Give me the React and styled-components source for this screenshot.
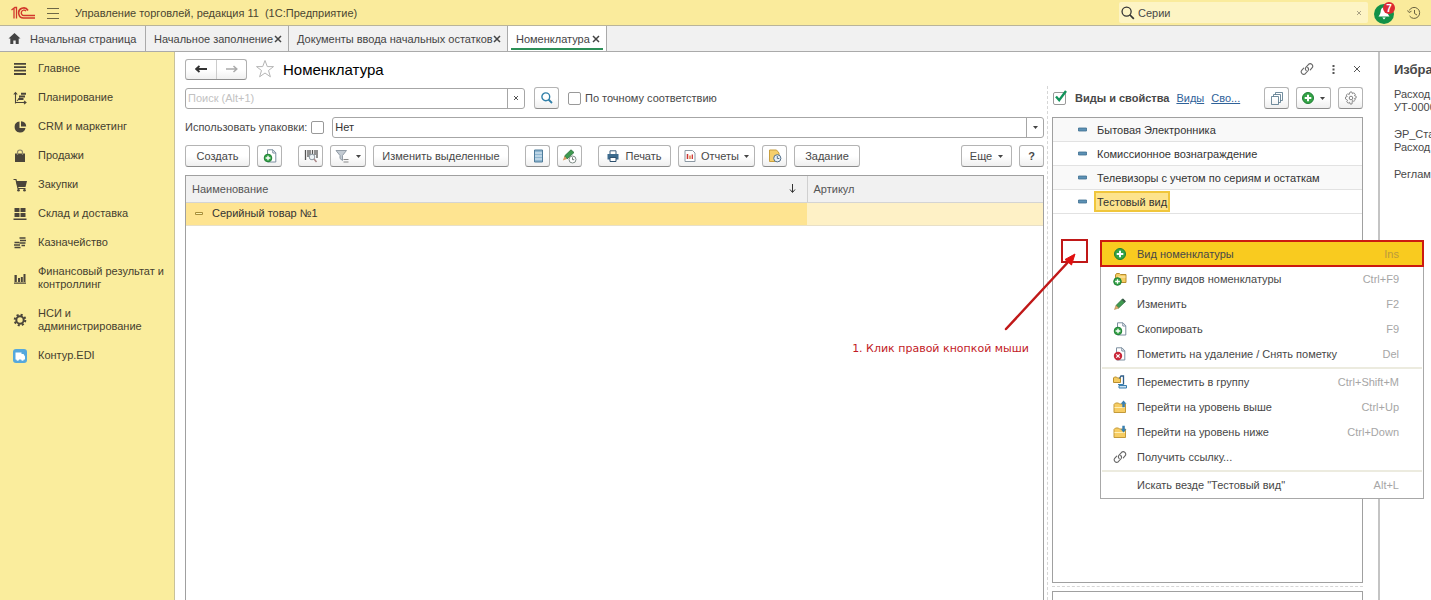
import React from 'react';
import styled, { createGlobalStyle } from 'styled-components';

const Global = createGlobalStyle`
  * { box-sizing: border-box; }
  body { margin: 0; overflow: hidden; background: #fff; }
  body, button, input, select, table { font-family: "Liberation Sans", Arial, sans-serif; font-size: 11px; color: #484848; }
  button { padding: 0; border: 0; background: none; cursor: pointer; }
  svg { display: block; flex: none; }
`;

const Page = styled.div`
  display: flex;
  flex-direction: column;
  height: 100vh;
`;

/* Title bar */
const TopBar = styled.header`
  display: flex;
  align-items: center;
  height: 26px;
  flex: none;
  padding: 0 0 0 10px;
  background: #faeb9c;
  border-bottom: 1px solid #b9b49a;
`;
const AppTitle = styled.div`
  flex: 1;
  margin-left: 5px;
  color: #4b4632;
  white-space: pre;
`;
const IconButton = styled.button`
  display: flex;
  align-items: center;
  justify-content: center;
  width: ${(p) => p.$w || 20}px;
  height: 20px;
`;
const TopSearch = styled.label`
  display: flex;
  align-items: center;
  width: 249px;
  height: 21px;
  padding: 0 6px 0 2px;
  margin-right: 5px;
  background: #fdf4c4;
  border-radius: 2px;
  input {
    flex: 1;
    min-width: 0;
    border: 0;
    padding: 0 3px;
    background: transparent;
    outline: none;
  }
`;

/* Tabs */
const Tabs = styled.nav`
  display: flex;
  flex: none;
  height: 26px;
  background: #f1f1f1;
  border-bottom: 1px solid #aaa;
`;
const Tab = styled.div`
  display: flex;
  align-items: center;
  justify-content: space-between;
  width: ${(p) => p.$w}px;
  padding: 0 6px 0 8px;
  border-right: 1px solid #aaa;
  background: ${(p) => (p.$active ? '#fff' : 'transparent')};
  box-shadow: ${(p) => (p.$active ? 'inset 3px 0 #fff, inset -3px 0 #fff, inset 0 -1px #fff, inset 0 -3px #2c8f57' : 'none')};
  white-space: nowrap;
`;
const TabLink = styled.a`
  display: flex;
  align-items: center;
  gap: 9px;
  color: #444;
  text-decoration: none;
`;

/* Body */
const Body = styled.div`
  display: flex;
  flex: 1;
  min-height: 0;
`;
const Sidebar = styled.nav`
  display: flex;
  flex-direction: column;
  flex: none;
  width: 175px;
  padding: 2px 0;
  background: #faed9d;
  border-right: 1px solid #c9c29a;
`;
const SideItem = styled.a`
  display: flex;
  align-items: center;
  gap: 11px;
  min-height: 29px;
  padding: ${(p) => (p.$tall ? 8 : 0)}px 6px ${(p) => (p.$tall ? 8 : 0)}px 13px;
  line-height: 13px;
  color: #45402f;
  text-decoration: none;
`;
const Main = styled.main`
  display: flex;
  flex-direction: column;
  flex: 1;
  min-width: 0;
  padding: 0 15px 0 10px;
`;
const PageHead = styled.div`
  display: flex;
  align-items: center;
  flex: none;
  height: 34px;
`;
const NavPair = styled.div`
  display: flex;
  height: 21px;
  border: 1px solid #b0b0b0;
  border-bottom-color: #8f8f8f;
  border-radius: 3px;
  background: linear-gradient(#fff 50%, #f0f0f0);
  button { display: flex; align-items: center; justify-content: center; width: 30px; }
  button + button { border-left: 1px solid #ccc; }
`;
const Heading = styled.h1`
  flex: 1;
  margin: 0 0 0 8px;
  font-size: 15px;
  font-weight: 400;
  color: #000;
`;
const Columns = styled.div`
  display: flex;
  flex: 1;
  min-height: 0;
`;
const Left = styled.section`
  display: flex;
  flex-direction: column;
  flex: 1;
  min-width: 0;
  padding-top: 1px;
`;
const Row = styled.div`
  display: flex;
  align-items: center;
  flex: none;
  height: 22px;
  margin-bottom: ${(p) => p.$mb || 0}px;
  gap: ${(p) => p.$gap || 0}px;
`;
const Field = styled.div`
  display: flex;
  align-items: stretch;
  flex: ${(p) => (p.$w ? 'none' : 1)};
  width: ${(p) => (p.$w ? `${p.$w}px` : 'auto')};
  height: 21px;
  border: 1px solid #a6a6a6;
  border-radius: 3px;
  background: #fff;
  input, select {
    flex: 1;
    min-width: 0;
    border: 0;
    padding: 0 2px;
    background: transparent;
    appearance: none;
    outline: none;
    color: #333;
  }
  input::placeholder { color: #c2c2c2; opacity: 1; }
`;
const FieldEnd = styled.span`
  display: flex;
  align-items: center;
  justify-content: center;
  width: 17px;
  border-left: 1px solid #a6a6a6;
  pointer-events: none;
`;
const Check = styled.label`
  display: flex;
  align-items: center;
  gap: 4px;
  white-space: nowrap;
  font-weight: ${(p) => (p.$bold ? 700 : 400)};
`;
const Tick = styled.input.attrs({ type: 'checkbox' })`
  appearance: none;
  width: 13px;
  height: 13px;
  margin: 0;
  border: 1px solid #999;
  border-radius: 2px;
  background: #fff;
`;
const TickBox = styled.span`
  position: relative;
  display: flex;
  margin: 0 5px 0 1px;
  svg { position: absolute; left: 1px; top: -3px; pointer-events: none; }
`;
const Button = styled.button`
  display: flex;
  align-items: center;
  justify-content: center;
  gap: ${(p) => p.$gap || 6}px;
  flex: none;
  width: ${(p) => p.$w || 25}px;
  height: 22px;
  border: 1px solid #b4b4b4;
  border-bottom-color: #8c8c8c;
  border-radius: 3px;
  background: linear-gradient(#fff 50%, #efefef);
  white-space: nowrap;
  font-weight: ${(p) => (p.$bold ? 700 : 400)};
`;
const Break = styled.span`
  width: ${(p) => p.$w || 2}px;
  flex: none;
`;
const Spacer = styled.span`
  flex: 1;
`;
const Grid = styled.div`
  flex: 1;
  border: 1px solid #a0a0a0;
  border-bottom: 0;
`;
const Table = styled.table`
  width: 100%;
  border-collapse: collapse;
  table-layout: fixed;
  th {
    height: 26px;
    padding: 0 6px;
    text-align: left;
    font-weight: 400;
    background: #f1f1f1;
    border-bottom: 1px solid #d4d4d4;
    color: #555;
  }
  th + th { border-left: 1px solid #d0d0d0; width: 236px; }
  td { height: 23px; padding: 0 9px 1px; background: #fee491; border: 1px solid #fff; border-width: 1px 0; border-bottom-color: #e8e0c8; color: #333; }
  td + td { background: #fef1c6; }
`;
const Inline = styled.div`
  display: flex;
  align-items: center;
  justify-content: ${(p) => (p.$spread ? 'space-between' : 'flex-start')};
  gap: 8px;
  padding-right: ${(p) => (p.$spread ? 5 : 0)}px;
`;
const Splitter = styled.div`
  flex: none;
  width: 8px;
  padding-left: 3px;
  &::before { content: ''; display: block; height: 100%; border-left: 1px dashed #d6d6d6; }
`;
const HSplitter = styled.div`
  flex: none;
  height: 8px;
  padding-top: 3px;
  &::before { content: ''; display: block; border-top: 1px dashed #d6d6d6; }
`;
const Right = styled.section`
  position: relative;
  display: flex;
  flex-direction: column;
  flex: none;
  width: 311px;
  padding-top: 1px;
`;
const TextLink = styled.a`
  color: #2f6299;
  text-decoration: underline;
`;
const KindList = styled.ul`
  flex: 1;
  margin: 0;
  padding: 0;
  list-style: none;
  border: 1px solid #a0a0a0;
`;
const Kind = styled.li`
  display: flex;
  align-items: center;
  gap: 7px;
  height: 24px;
  padding-left: 25px;
  border-bottom: 1px solid #e2e2e2;
  background: ${(p) => (p.$odd ? '#f9f9f9' : '#fff')};
  color: #333;
`;
const KindName = styled.span`
  padding: 3px 1px 1px;
  border: 2px solid ${(p) => (p.$selected ? '#f0c63c' : 'transparent')};
  background: ${(p) => (p.$selected ? '#fde38c' : 'transparent')};
  line-height: 13px;
`;
const LowerBox = styled.div`
  flex: none;
  height: 9px;
  border: 1px solid #a0a0a0;
  border-bottom: 0;
`;
const Favorites = styled.aside`
  flex: none;
  width: 53px;
  padding: 10px 0 0 14px;
  border-left: 2px solid #c4c4c4;
  overflow: hidden;
  white-space: nowrap;
  h2 { margin: 0 0 10px; font-size: 13px; line-height: 16px; }
  p { margin: 0 0 14px; line-height: 13px; }
`;

/* Context menu */
const Menu = styled.div`
  position: absolute;
  z-index: 3;
  top: 154px;
  left: 48px;
  width: 324px;
  padding-bottom: 1px;
  background: #fff;
  border: 1px solid #a8a8a8;
  border-top: 0;
  hr { height: 2px; margin: 1px 1px 0; border: 0; background: #ecebdf; }
`;
const MenuItem = styled.button`
  display: flex;
  align-items: center;
  gap: 9px;
  width: ${(p) => (p.$active ? 324 : 322)}px;
  height: ${(p) => (p.$active ? 27 : 25)}px;
  margin: ${(p) => (p.$active ? '0 -1px -1px' : 0)};
  padding: 0 ${(p) => (p.$active ? 23 : 24)}px 0 ${(p) => (p.$active ? 10 : 11)}px;
  border: ${(p) => (p.$active ? '2px solid #cc1a10' : 0)};
  background: ${(p) => (p.$active ? '#f9cb1f' : 'transparent')};
  text-align: left;
  span { flex: 1; white-space: nowrap; }
  kbd { font: inherit; color: ${(p) => (p.$active ? '#b99a3c' : '#a6a6a6')}; }
`;
const MenuIcon = styled.i`
  display: flex;
  justify-content: center;
  width: 16px;
`;

/* Red call-out */
const Target = styled.div`
  position: absolute;
  z-index: 2;
  top: 153px;
  left: 9px;
  width: 27px;
  height: 24px;
  border: 2px solid #c01818;
`;
const Arrow = styled.svg`
  position: absolute;
  z-index: 2;
  top: 164px;
  left: -52px;
`;
const Note = styled.div`
  position: absolute;
  z-index: 2;
  top: 256px;
  right: 334px;
  font-family: "DejaVu Sans", Verdana, sans-serif;
  font-size: 11px;
  line-height: 14px;
  color: #c21a26;
  white-space: nowrap;
`;

const Svg = ({ w = 14, h, children, ...rest }) => (
  <svg width={w} height={h || w} viewBox={`0 0 ${w} ${h || w}`} fill="none" aria-hidden="true" {...rest}>{children}</svg>
);
const Cross = ({ size = 7, color = '#555', sw = 1 }) => (
  <Svg w={size} stroke={color} strokeWidth={sw}><path d={`M1 1L${size - 1} ${size - 1}M${size - 1} 1L1 ${size - 1}`} /></Svg>
);
const Caret = () => <Svg w={5} h={3}><path d="M0 0h5L2.5 3z" fill="#444" /></Svg>;
const Plus = ({ x = 6, y = 6, r = 6 }) => (
  <g>
    <circle cx={x} cy={y} r={r - 0.5} fill="#35a447" stroke="#1e7f34" />
    <path d={`M${x - r * 0.55} ${y}h${r * 1.1}M${x} ${y - r * 0.55}v${r * 1.1}`} stroke="#fff" strokeWidth={r > 5 ? 2 : 1.3} />
  </g>
);
const PlusIcon = () => <Svg w={12}><Plus /></Svg>;
const DocPlus = () => (
  <Svg w={14}>
    <path d="M4.500 .8h5.500l2.800 3v9.200h-8.300z" fill="#fff" stroke="#7c8fa0" /><path d="M9.800 1v3h3" stroke="#7c8fa0" />
    <Plus x={5} y={9} r={4.300} />
  </Svg>
);
const DocDelete = () => (
  <Svg w={14}>
    <path d="M3.500 .8h5.500l2.800 3v9.200h-8.300z" fill="#fff" stroke="#7c8fa0" /><path d="M8.800 1v3h3" stroke="#7c8fa0" />
    <circle cx="5" cy="9" r="4.200" fill="#c9283a" /><path d="M3.300 7.300l3.400 3.400M6.700 7.300l-3.400 3.400" stroke="#fff" strokeWidth="1.200" />
  </Svg>
);
const Pencil = () => (
  <Svg w={14}>
    <path d="M3 8.500L9.500 2l2.800 2.600L5.600 11z" fill="#3f9a50" stroke="#286d39" strokeWidth=".8" />
    <path d="M8.600 2.800l2.800 2.700 1.400-1.200-2.700-2.800z" fill="#3d5a4a" />
    <path d="M3 8.500L1.500 12.500l4.100-1.500z" fill="#e3b36f" stroke="#a07436" strokeWidth=".5" />
  </Svg>
);
const PencilClock = () => (
  <Svg w={15}>
    <path d="M2.500 7L9 .8l3 2.700L5 10z" fill="#3f9a50" stroke="#286d39" strokeWidth=".8" />
    <path d="M2.500 7L.8 11.500 5 10z" fill="#d89b62" />
    <circle cx="10.500" cy="10.500" r="3.500" fill="#fff" stroke="#7f8c86" /><path d="M10.500 8.300v2.400h1.700" stroke="#6b776f" />
  </Svg>
);
const Chain = () => (
  <Svg w={14} stroke="#666" strokeWidth="1.100" strokeLinecap="round">
    <path d="M6.200 8.600a2.600 2.600 0 0 1-.1-3.500L8.600 2.300a2.500 2.500 0 0 1 3.600 3.400L10.300 7.800" />
    <path d="M7.700 5.500a2.600 2.600 0 0 1 .1 3.500L5.300 11.700a2.500 2.500 0 0 1-3.600-3.400L3.700 6.200" />
  </Svg>
);
const folder = 'M1 12.500v-8l1.500-1.500h3l1 1h6v8.500z';
const FolderPlus = () => (
  <Svg w={14}><path d="M2.500 9V3l1-1.500h3l1 1h5.500v8h-10.500z" fill="#f5cc62" stroke="#b98e2e" /><path d="M5 5h7.500" stroke="#fff0b8" /><Plus x={4.500} y={9.500} r={4.300} /></Svg>
);
const FolderUp = () => (
  <Svg w={14}><path d={folder} fill="#f7cd63" stroke="#c39a3a" /><path d="M1.500 7.500h10.500" stroke="#fff0b8" /><path d="M10.500.5l3 3.200h-1.700v3.500H9.300V3.700H7.700z" fill="#397fb0" /></Svg>
);
const FolderDown = () => (
  <Svg w={14}><path d={folder} fill="#f7cd63" stroke="#c39a3a" /><path d="M1.500 7.500h10.500" stroke="#fff0b8" /><path d="M10.500 7.500l3-3.200h-1.700V.8H9.300v3.500H7.700z" fill="#397fb0" /></Svg>
);
const FolderMove = () => (
  <Svg w={14}>
    <path d="M.5 7.500V3l1-1h2l1 1h3v4.500z" fill="#f5cc62" stroke="#b98e2e" />
    <path d="M6.500 3.500L8 1h2.500v8.500" stroke="#2f5d88" strokeWidth="1.300" /><path d="M5 9.500h5.500M6 10.500h7.500v2.500H6z" stroke="#397fb0" fill="#cbe0ef" />
  </Svg>
);
const Lens = ({ color = '#2f7fa8', size = 12, sw = 1.4 }) => (
  <Svg w={12} width={size} height={size} stroke={color}><circle cx="4.800" cy="4.800" r="3.900" strokeWidth={sw} /><path d="M7.500 7.500L11 11" strokeWidth={sw + 0.4} /></Svg>
);

const dark = '#4a453a';
const sideIcons = {
  main: <path d="M1 1.800h12M1 5.200h12M1 8.600h12M1 12h12" stroke={dark} strokeWidth="1.800" />,
  plan: <g stroke={dark}><path d="M2.500 12.500V2M.8 3.500l1.700-2 1.700 2M2.500 11.500H13M11 9.800l2 1.700-2 1.700M4 10l3-3.500" strokeWidth="1.100" /><path d="M6 5.500h6M8 2.800h5M5.500 8h5" strokeWidth="1.900" /></g>,
  crm: <g fill={dark}><path d="M6.500 1.500A5.500 5.500 0 1 0 12.500 8H6.500z" /><path d="M8 1.300V6.500h5.200A5.500 5.500 0 0 0 8 1.300z" /></g>,
  sales: <g><path d="M2 4.500h10V13H2z" fill={dark} /><path d="M4.500 6V3.500a2.500 2.500 0 0 1 5 0V6" stroke="#8c856a" strokeWidth="1.200" /></g>,
  buy: <g fill={dark}><path d="M3 3h11l-1.500 6H4.500z" /><path d="M.5 1.500H3L5 10.500h7.500" stroke={dark} strokeWidth="1.200" fill="none" /><circle cx="5.500" cy="12.300" r="1.300" /><circle cx="11.500" cy="12.300" r="1.300" /></g>,
  stock: <path d="M1.500 1h5v4h-5zM7.500 1h5v4h-5zM1.500 6h5v4h-5zM7.500 6h5v4h-5zM.5 11.500h13v1.500H.5z" fill={dark} />,
  cash: <g stroke={dark} strokeWidth="1.600"><path d="M6.500 2h6M7 4.500h6M6.500 7h6" /><path d="M1.500 6.500h5M1 9h6M1.500 11.500h6M8.500 9.500h3.500" /></g>,
  fin: <path d="M1.500 4h2.300v7H1.500zM5 7h2v4H5zM7.800 6h2v5h-2zM10.500 3h2v8h-2zM1 11.500h12v1.200H1z" fill={dark} />,
  gear: <g stroke={dark}><circle cx="7" cy="7" r="3.700" strokeWidth="2" /><circle cx="7" cy="7" r="5.300" strokeWidth="2" strokeDasharray="2.100 2.060" /></g>,
  edi: <g><rect x="0" y="0" width="14" height="14" rx="3" fill="#55a8dc" /><path d="M2.500 3.500h6v1.500h2l1.500 2.500v3h-1.200a1.300 1.300 0 0 1-2.600 0H6a1.300 1.300 0 0 1-2.600 0h-.9z" fill="#fff" /></g>,
};
const sections = [
  ['main', 'Главное'], ['plan', 'Планирование'], ['crm', 'CRM и маркетинг'], ['sales', 'Продажи'],
  ['buy', 'Закупки'], ['stock', 'Склад и доставка'], ['cash', 'Казначейство'],
  ['fin', 'Финансовый результат и контроллинг', true], ['gear', 'НСИ и администрирование', true], ['edi', 'Контур.EDI'],
];
const kinds = ['Бытовая Электронника', 'Комиссионное вознаграждение', 'Телевизоры с учетом по сериям и остаткам', 'Тестовый вид'];
const menu = [
  [<PlusIcon />, 'Вид номенклатуры', 'Ins'],
  [<FolderPlus />, 'Группу видов номенклатуры', 'Ctrl+F9'],
  [<Pencil />, 'Изменить', 'F2'],
  [<DocPlus />, 'Скопировать', 'F9'],
  [<DocDelete />, 'Пометить на удаление / Снять пометку', 'Del'],
  null,
  [<FolderMove />, 'Переместить в группу', 'Ctrl+Shift+M'],
  [<FolderUp />, 'Перейти на уровень выше', 'Ctrl+Up'],
  [<FolderDown />, 'Перейти на уровень ниже', 'Ctrl+Down'],
  [<Chain />, 'Получить ссылку...', ''],
  null,
  [null, 'Искать везде "Тестовый вид"', 'Alt+L'],
];

export default function App() {
  return (
    <Page>
      <Global />
      <TopBar>
        <Svg w={26} h={14} stroke="#d2382b">
          <path d="M1.500 4l2.500-2v10.500M4.500 1.500h2v11" strokeWidth="1.300" />
          <path d="M18 4.500A5 5 0 1 0 14 12h11" strokeWidth="1.600" />
          <path d="M16 5a2.700 2.700 0 1 0-2 4.500h11" strokeWidth="1.400" />
        </Svg>
        <IconButton $w={34} aria-label="Главное меню"><Svg w={12} h={12} stroke="#6d6747"><path d="M0 1.500h12M0 6.500h12M0 11.500h12" /></Svg></IconButton>
        <AppTitle>Управление торговлей, редакция 11  (1С:Предприятие)</AppTitle>
        <TopSearch>
          <Lens color="#333" size={14} sw={1.1} />
          <input defaultValue="Серии" aria-label="Поиск" />
          <Cross size={6} color="#aaa285" />
        </TopSearch>
        <IconButton $w={24} aria-label="Оповещения, 7">
          <svg width="24" height="24" viewBox="0 0 24 24">
            <circle cx="11" cy="13" r="10" fill="#139148" />
            <path d="M11 6.500c-2.500 0-3.200 2-3.400 4.500-.2 2-1.200 3-2.100 4.500h11c-.9-1.500-1.900-2.500-2.100-4.500-.2-2.500-.900-4.500-3.400-4.500zM9.300 16.500h3.400l-1.700 2z" fill="#fff" />
            <circle cx="16" cy="7" r="6" fill="#dc2a33" />
            <text x="16" y="11" textAnchor="middle" fontSize="10" fontWeight="700" fill="#fff" fontFamily="Liberation Sans, sans-serif">7</text>
          </svg>
        </IconButton>
        <IconButton $w={34} aria-label="История">
          <Svg w={14} stroke="#6a6340"><path d="M2.200 4.500A5.500 5.500 0 1 1 2.600 10M.5 4.500L2 6.500l2.500-1.300M7.500 4v3.500L10 9" /></Svg>
        </IconButton>
      </TopBar>

      <Tabs>
        <Tab $w={146}>
          <TabLink href="#home"><Svg w={13}><path d="M6.500 1L.5 6.500h1.800V12h3V8.500h2.400V12h3V6.500h1.800z" fill="#444" /></Svg>Начальная страница</TabLink>
        </Tab>
        {[['Начальное заполнение', 143], ['Документы ввода начальных остатков', 219], ['Номенклатура', 99]].map(([name, w], i) => (
          <Tab key={name} $w={w} $active={i === 2}>
            <TabLink href="#tab">{name}</TabLink>
            <button aria-label="Закрыть вкладку"><Cross size={8} color="#444" sw={1.500} /></button>
          </Tab>
        ))}
      </Tabs>

      <Body>
        <Sidebar>
          {sections.map(([icon, name, tall]) => (
            <SideItem key={icon} href="#section" $tall={tall}><Svg w={14}>{sideIcons[icon]}</Svg>{name}</SideItem>
          ))}
        </Sidebar>

        <Main>
          <PageHead>
            <NavPair>
              <button aria-label="Назад"><Svg w={12} h={8} stroke="#333" strokeWidth="1.800"><path d="M1 4h11M4.500 1L1.200 4l3.300 3" /></Svg></button>
              <button aria-label="Вперед"><Svg w={12} h={8} stroke="#aaa" strokeWidth="1.500"><path d="M0 4h11M7.500 1l3.300 3-3.300 3" /></Svg></button>
            </NavPair>
            <Break $w={8} />
            <Svg w={20} stroke="#b5b5b5"><path d="M10 1.500l2.300 6.100h6.200l-5 3.900 1.900 6.300L10 14l-5.400 3.800 1.900-6.300-5-3.900h6.200z" /></Svg>
            <Heading>Номенклатура</Heading>
            <IconButton $w={28} aria-label="Ссылка"><Chain /></IconButton>
            <IconButton $w={24} aria-label="Меню"><Svg w={3} h={9}><path d="M.5 0h2v2h-2zM.5 3.500h2v2h-2zM.5 7h2v2h-2z" fill="#555" /></Svg></IconButton>
            <Break $w={6} />
            <IconButton $w={12} aria-label="Закрыть"><Cross size={8} /></IconButton>
          </PageHead>

          <Columns>
            <Left>
              <Row $mb={7} $gap={9}>
                <Field $w={340}>
                  <input placeholder="Поиск (Alt+1)" aria-label="Поиск" />
                  <FieldEnd><Cross size={6} /></FieldEnd>
                </Field>
                <Button aria-label="Найти"><Lens /></Button>
                <Check><Tick />По точному соответствию</Check>
              </Row>
              <Row $mb={7} $gap={8}>
                <Check>Использовать упаковки:<Tick /></Check>
                <Field>
                  <select aria-label="Упаковки" defaultValue="Нет"><option>Нет</option></select>
                  <FieldEnd><Caret /></FieldEnd>
                </Field>
              </Row>
              <Row $mb={8} $gap={7}>
                <Button $w={65}>Создать</Button>
                <Button aria-label="Скопировать"><DocPlus /></Button>
                <Break />
                <Button aria-label="Штрихкод">
                  <Svg w={14}><path d="M1.500 1v10M4 1v7M6 1v5M8.500 1v4M11 1v5M13 1v8" stroke="#555" strokeWidth="1.300" /><circle cx="8" cy="8" r="2.800" fill="#eef3f6" stroke="#8a97a0" /><path d="M10 10l2.500 3" stroke="#a88" strokeWidth="1.500" /></Svg>
                </Button>
                <Button $w={36} aria-label="Отбор">
                  <Svg w={15}><path d="M1 1.500h10.500L7.500 6.500v5l-2.500-2v-3z" fill="#c3cbd3" stroke="#929ca6" /><path d="M8.500 10.500h5M8.500 13h5" stroke="#888" /></Svg><Caret />
                </Button>
                <Button $w={136}>Изменить выделенные</Button>
                <Break />
                <Button aria-label="Список">
                  <Svg w={12} h={14}><path d="M2.500 1h8v12h-8z" fill="#8fb6d0" stroke="#4f7c9b" /><path d="M3 4h7M3 7h7M3 10h7" stroke="#e9f3fa" /></Svg>
                </Button>
                <Button aria-label="Изменить по расписанию"><PencilClock /></Button>
                <Break />
                <Button $w={73}>
                  <Svg w={12}><path d="M3 4V.800h6V4" fill="#fff" stroke="#3c5f7d" /><path d="M.5 4h11v5.500H.5z" fill="#3c6b8e" /><path d="M3 7.500h6v4H3z" fill="#fff" stroke="#2c4f6d" /></Svg>Печать
                </Button>
                <Button $w={77} $gap={5}>
                  <Svg w={12}><path d="M1 .5h7.500l2.500 2.500v8.500H1z" fill="#fff" stroke="#8b98a3" /><path d="M3.500 4v5" stroke="#c33" strokeWidth="1.500" /><path d="M6 5.500V9" stroke="#d84" strokeWidth="1.500" /><path d="M8.300 4.500V9" stroke="#c33" strokeWidth="1.300" /></Svg>Отчеты<Caret />
                </Button>
                <Button aria-label="Отчет по расписанию">
                  <Svg w={14}><path d="M1.500 1h7l2.500 3v8.500H1.500z" fill="#f6cf6c" stroke="#c99f3e" /><circle cx="9.300" cy="9.300" r="3.600" fill="#e9f0f6" stroke="#54718b" /><path d="M9.300 7v2.500h2" stroke="#54718b" /></Svg>
                </Button>
                <Button $w={66}>Задание</Button>
                <Spacer />
                <Button $w={51}>Еще<Caret /></Button>
                <Button $bold aria-label="Справка">?</Button>
              </Row>
              <Grid>
                <Table>
                  <thead>
                    <tr>
                      <th scope="col"><Inline $spread>Наименование<Svg w={7} h={9} stroke="#333"><path d="M3.500 0v8M1 5.500l2.500 3L6 5.500" /></Svg></Inline></th>
                      <th scope="col">Артикул</th>
                    </tr>
                  </thead>
                  <tbody>
                    <tr>
                      <td><Inline><Svg w={9} h={5}><path d="M.5 1.500h7v2h-7z" fill="#fff3b0" stroke="#a88f3a" /></Svg>Серийный товар №1</Inline></td>
                      <td />
                    </tr>
                  </tbody>
                </Table>
              </Grid>
            </Left>

            <Splitter />

            <Right>
              <Row $mb={8} $gap={7}>
                <Check $bold>
                  <TickBox><Tick defaultChecked aria-label="Виды и свойства" /><Svg w={14} stroke="#11935a" strokeWidth="2.400"><path d="M2 7.500l3.200 3.700L12 2" /></Svg></TickBox>
                  Виды и свойства
                </Check>
                <TextLink href="#kinds">Виды</TextLink>
                <TextLink href="#props">Сво...</TextLink>
                <Spacer />
                <Button aria-label="Окна">
                  <Svg w={13} stroke="#4f7187"><path d="M5.500 2.500v-2h7v8h-2M3.500 4.500v-2h7v8h-2M1.500 4.500h7v8h-7z" strokeWidth=".8" /></Svg>
                </Button>
                <Button $w={35} $gap={6} aria-label="Добавить"><PlusIcon /><Caret /></Button>
                <Button aria-label="Настройки">
                  <Svg w={14} stroke="#808080"><circle cx="7" cy="7" r="1.800" /><path d="M6 1h2l.4 1.700 1.500-.9 1.400 1.400-.9 1.500 1.700.4v2l-1.700.4.9 1.500-1.400 1.400-1.500-.9L8 13H6l-.4-1.700-1.500.9-1.400-1.400.9-1.500L1.500 8V6l1.700-.4-.9-1.500 1.400-1.400 1.500.9z" strokeWidth=".9" /></Svg>
                </Button>
              </Row>
              <KindList>
                {kinds.map((k, i) => (
                  <Kind key={k} $odd={i % 2 === 0}>
                    <Svg w={9} h={5}><path d="M.5 1h8v3h-8z" fill="#5c91b5" stroke="#3f6f91" strokeWidth=".8" /></Svg>
                    <KindName $selected={i === 3}>{k}</KindName>
                  </Kind>
                ))}
              </KindList>
              <HSplitter />
              <LowerBox />

              <Target />
              <Arrow width="76" height="84" viewBox="0 0 76 84" aria-hidden="true">
                <path d="M6 79L70 10" stroke="#c01818" strokeWidth="2.500" strokeLinecap="round" />
                <path d="M75 4L71.500 15 65 9.500z" fill="#e01010" stroke="#e01010" />
              </Arrow>
              <Note>1. Клик правой кнопкой мыши</Note>

              <Menu role="menu">
                {menu.map((m, i) => m ? (
                  <MenuItem key={m[1]} role="menuitem" $active={i === 0}><MenuIcon>{m[0]}</MenuIcon><span>{m[1]}</span><kbd>{m[2]}</kbd></MenuItem>
                ) : <hr key={i} />)}
              </Menu>
            </Right>
          </Columns>
        </Main>

        <Favorites>
          <h2>Избранное</h2>
          <p>Расход<br />УТ-0000</p>
          <p>ЭР_Ста<br />Расход</p>
          <p>Реглам</p>
        </Favorites>
      </Body>
    </Page>
  );
}
